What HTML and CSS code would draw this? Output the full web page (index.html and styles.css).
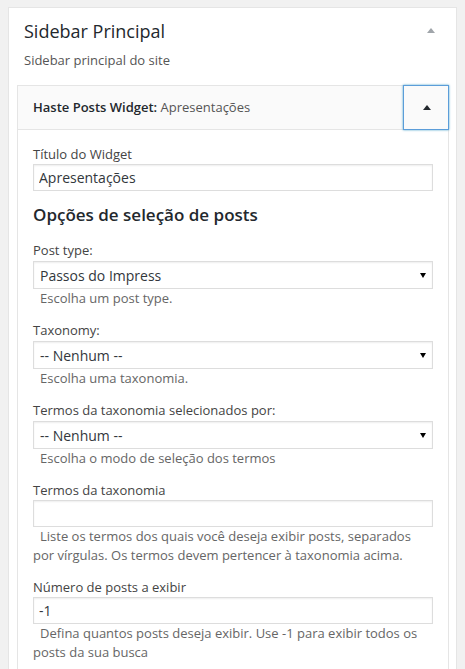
FILE: index.html
```html
<!DOCTYPE html>
<html lang="pt-BR">
<head>
<meta charset="utf-8">
<title>Widgets</title>
<link rel="stylesheet" href="styles.css">
</head>
<body>
<div class="sidebar">
  <div class="sidebar-name">
    <h2>Sidebar Principal</h2>
    <svg class="sidebar-toggle" width="8" height="5" viewBox="0 0 8 5"><polygon points="4,0 8,5 0,5" fill="#a0a5aa"/></svg>
  </div>
  <div class="sidebar-description">Sidebar principal do site</div>

  <div class="widget">
    <div class="widget-top">
      <h3 class="widget-title">Haste Posts Widget:<span class="in-widget-title"> Apresentações</span></h3>
      <button class="widget-action" type="button" aria-label="Fechar widget">
        <svg width="8" height="5" viewBox="0 0 8 5"><polygon points="4,0 8,5 0,5" fill="#23282d"/></svg>
      </button>
    </div>
    <div class="widget-inside">
      <div class="field">
        <label>Título do Widget</label>
        <input class="widefat" type="text" value="Apresentações">
      </div>

      <h3 class="section-title">Opções de seleção de posts</h3>

      <div class="field">
        <label>Post type:</label>
        <div class="select">
          <span>Passos do Impress</span>
          <svg class="select-arrow" width="6" height="5" viewBox="0 0 6 5"><polygon points="0,0 6,0 3,5" fill="#000"/></svg>
        </div>
        <div class="desc">Escolha um post type.</div>
      </div>

      <div class="field">
        <label>Taxonomy:</label>
        <div class="select">
          <span>-- Nenhum --</span>
          <svg class="select-arrow" width="6" height="5" viewBox="0 0 6 5"><polygon points="0,0 6,0 3,5" fill="#000"/></svg>
        </div>
        <div class="desc">Escolha uma taxonomia.</div>
      </div>

      <div class="field">
        <label>Termos da taxonomia selecionados por:</label>
        <div class="select">
          <span>-- Nenhum --</span>
          <svg class="select-arrow" width="6" height="5" viewBox="0 0 6 5"><polygon points="0,0 6,0 3,5" fill="#000"/></svg>
        </div>
        <div class="desc">Escolha o modo de seleção dos termos</div>
      </div>

      <div class="field">
        <label>Termos da taxonomia</label>
        <input class="widefat" type="text" value="">
        <div class="desc">Liste os termos dos quais você deseja exibir posts, separados por vírgulas. Os termos devem pertencer à taxonomia acima.</div>
      </div>

      <div class="field">
        <label>Número de posts a exibir</label>
        <input class="widefat" type="text" value="-1">
        <div class="desc">Defina quantos posts deseja exibir. Use -1 para exibir todos os posts da sua busca</div>
      </div>
    </div>
  </div>
</div>
</body>
</html>
```

FILE: styles.css
```css
html {
  overflow: hidden;
}

body {
  margin: 7px 8px 0;
  background: #f1f1f1;
  font-family: "Open Sans", "Noto Sans", sans-serif;
  font-size: 13px;
  color: #444;
  overflow: hidden;
}

.sidebar {
  background: #fff;
  border: 1px solid #e5e5e5;
  padding-bottom: 20px;
}

.sidebar-name {
  display: flex;
  align-items: flex-start;
  padding: 10px 21px 0 15px;
}

.sidebar-name h2 {
  flex: 1;
  margin: 0;
  font-size: 18px;
  line-height: 26px;
  font-weight: 400;
  color: #23282d;
}

.sidebar-toggle {
  display: block;
  margin-top: 10px;
}

.sidebar-description {
  margin: 6px 15px 0;
  line-height: 20px;
  color: #555;
}

.widget {
  margin: 15px 7px 0 8px;
  border: 1px solid #e5e5e5;
  background: #fff;
}

.widget-top {
  display: flex;
  height: 43px;
  background: #fafafa;
  border-bottom: 1px solid #e5e5e5;
}

.widget-title {
  flex: 1;
  margin: 0;
  padding: 15px;
  font-size: 13px;
  line-height: 13px;
  font-weight: 600;
  color: #23282d;
  white-space: nowrap;
}

.in-widget-title {
  font-weight: 400;
  color: #555;
}

.widget-action {
  width: 46px;
  height: 45px;
  margin: -1px -1px -1px 0;
  padding: 0;
  border: 1px solid #5b9dd9;
  background: #fafafa;
  box-shadow: 0 0 2px rgba(30, 140, 190, 0.8);
  display: flex;
  align-items: center;
  justify-content: center;
}

.widget-action svg {
  display: block;
  margin-left: 2px;
}

.widget-inside {
  padding: 2px 15px 40px;
}

.field {
  margin: 13px 0;
}

.field label {
  display: block;
  line-height: 19px;
  color: #444;
}

.widefat {
  display: block;
  box-sizing: border-box;
  width: 100%;
  height: 27px;
  margin: 0;
  padding: 3px 5px;
  border: 1px solid #ddd;
  box-shadow: inset 0 1px 2px rgba(0, 0, 0, 0.07);
  background: #fff;
  font-family: "Open Sans", "Noto Sans", sans-serif;
  font-size: 14px;
  color: #32373c;
  outline: none;
}

.section-title {
  margin: 13px 0 15px;
  font-size: 17px;
  line-height: 22px;
  font-weight: 600;
  color: #23282d;
}

.select {
  position: relative;
  box-sizing: border-box;
  height: 28px;
  margin-top: 1px;
  padding: 0 6px;
  border: 1px solid #ddd;
  box-shadow: inset 0 1px 2px rgba(0, 0, 0, 0.07);
  background: #fff;
  display: flex;
  align-items: center;
  font-size: 14px;
  color: #32373c;
}

.select span {
  flex: 1;
}

.select-arrow {
  position: absolute;
  right: 6px;
  top: 11px;
}

.desc {
  line-height: 19px;
  text-indent: 7px;
  color: #666;
}
```
